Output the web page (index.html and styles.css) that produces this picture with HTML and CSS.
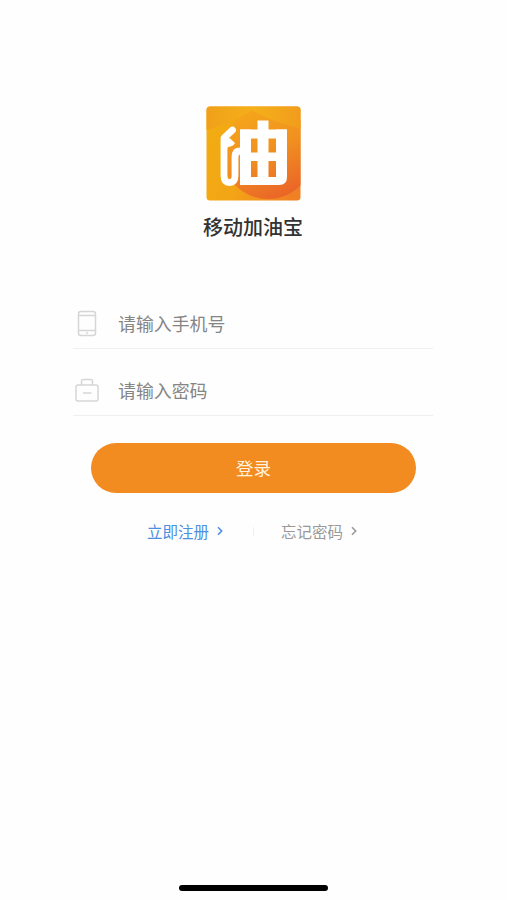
FILE: index.html
```html
<!DOCTYPE html>
<html lang="zh-CN">
<head>
<meta charset="utf-8">
<title>移动加油宝</title>
<link rel="stylesheet" href="styles.css">
</head>
<body>
<main class="screen">
  <header class="brand">
    <svg class="logo" viewBox="0 0 95 95" aria-hidden="true">
      <defs>
        <linearGradient id="base" x1="0" y1=".3" x2="1" y2=".7"><stop offset="0" stop-color="#f2ac12"/><stop offset=".45" stop-color="#f3a516"/><stop offset="1" stop-color="#ef8124"/></linearGradient>
        <linearGradient id="disc" x1=".2" y1="0" x2=".65" y2="1"><stop offset="0" stop-color="#f5a81a"/><stop offset=".5" stop-color="#f19120"/><stop offset="1" stop-color="#ea6328"/></linearGradient>
        <linearGradient id="sky" x1="0" y1="0" x2="1" y2="0"><stop offset="0" stop-color="#f0a019"/><stop offset=".5" stop-color="#f5b01a"/><stop offset="1" stop-color="#f19c1c"/></linearGradient>
        <clipPath id="tile"><rect x=".5" y=".5" width="94" height="94" rx="3.500"/></clipPath>
      </defs>
      <g clip-path="url(#tile)">
        <rect width="95" height="95" fill="url(#base)"/>
        <circle cx="62" cy="47" r="46" fill="url(#disc)"/>
        <path d="M0 24Q24 18 46 4Q70 18 95 22V0H0Z" fill="url(#sky)"/>
      </g>
      <g fill="none" stroke="#fff" stroke-width="6.800" stroke-linejoin="round">
        <path d="M26.500 24L18 32V70Q18 76.500 23.500 76.500Q29 76.500 29 70V51Q29 45 34 45H37" stroke-linecap="round"/>
      </g>
      <path d="M19 33L23.500 32L29 37Q27.500 40.500 22 41L19 45Z" fill="#fff"/>
      <g fill="#fff">
        <rect x="34" y="23.500" width="11" height="55.500"/>
        <rect x="51.500" y="14.500" width="11" height="62"/>
        <rect x="34" y="23.500" width="47" height="9"/>
        <rect x="34" y="46.500" width="46" height="8.500"/>
        <path d="M70 23.500H81V71Q81 79 73 79H34V71H70Z"/>
      </g>
    </svg>
    <h1 class="name">移动加油宝</h1>
  </header>
  <form class="form">
    <label class="field">
      <svg class="icon" viewBox="0 0 26 28" aria-hidden="true"><rect x="4.500" y="1.500" width="17" height="24" rx="2.500"/><path d="M4.500 5.500H21.500M4.500 20.500H21.500M12 23H14"/></svg>
      <input class="input" type="text" placeholder="请输入手机号">
    </label>
    <label class="field">
      <svg class="icon" viewBox="0 0 26 28" aria-hidden="true"><rect x="2" y="8" width="22" height="16" rx="2"/><path d="M7.500 8V4.500Q7.500 2.500 9.500 2.500H16.500Q18.500 2.500 18.500 4.500V8M9 16H17.500"/></svg>
      <input class="input" type="password" placeholder="请输入密码">
    </label>
    <button class="submit" type="button">登录</button>
  </form>
  <nav class="links">
    <a class="link register">立即注册<svg class="arrow" viewBox="0 0 6 10"><path d="M1 1.300L4.700 5L1 8.700"/></svg></a>
    <span class="divider"></span>
    <a class="link forgot">忘记密码<svg class="arrow" viewBox="0 0 6 10"><path d="M1 1.300L4.700 5L1 8.700"/></svg></a>
  </nav>
  <div class="home-bar"></div>
</main>
</body>
</html>
```
FILE: styles.css
```css
* { box-sizing: border-box; }
body {
  margin: 0;
  background: #fefefe;
  font-family: "Noto Sans CJK SC", sans-serif;
}
.screen {
  height: 900px;
  padding: 106px 74px 0 73px;
  display: flex;
  flex-direction: column;
  overflow: hidden;
}
.brand { display: flex; flex-direction: column; align-items: center; }
.logo { width: 95px; height: 95px; display: block; }
.name {
  margin: 11px 0 0;
  font-size: 20px;
  line-height: 30px;
  font-weight: 500;
  color: #333;
}
.form { display: flex; flex-direction: column; margin-top: 57px; }
.field {
  height: 50px;
  display: flex;
  align-items: center;
  border-bottom: 1px solid #efefef;
}
.field + .field { margin-top: 17px; }
.icon {
  width: 26px;
  height: 28px;
  margin-left: 1px;
  fill: none;
  stroke: #d6d6d6;
  stroke-width: 1.5;
}
.input {
  flex: 1;
  min-width: 0;
  margin-left: 18px;
  padding: 0 0 2px;
  border: 0;
  outline: 0;
  background: none;
  font: 17.900px/28px "Noto Sans CJK SC", sans-serif;
}
.input::placeholder { color: #858585; opacity: 1; }
.submit {
  height: 50px;
  margin: 27px 17px 0 18px;
  padding: 0;
  border: 0;
  border-radius: 25px;
  background: #f28b20;
  color: #fff2df;
  font: 17.500px/50px "Noto Sans CJK SC", sans-serif;
}
.links { display: flex; align-items: center; margin: 26px 0 0 74px; }
.link { display: flex; align-items: center; font-size: 15.500px; line-height: 24px; }
.register { color: #4d8fe0; }
.forgot { color: #999; }
.arrow {
  width: 6px;
  height: 10px;
  margin-left: 8px;
  fill: none;
  stroke: currentColor;
  stroke-width: 1.6;
}
.divider { width: 1px; height: 9px; margin: 0 27px 0 30px; background: #f1f1f1; }
.home-bar {
  width: 149px;
  height: 6px;
  margin: auto 0 9px 106px;
  border-radius: 3px;
  background: #000;
}
```
